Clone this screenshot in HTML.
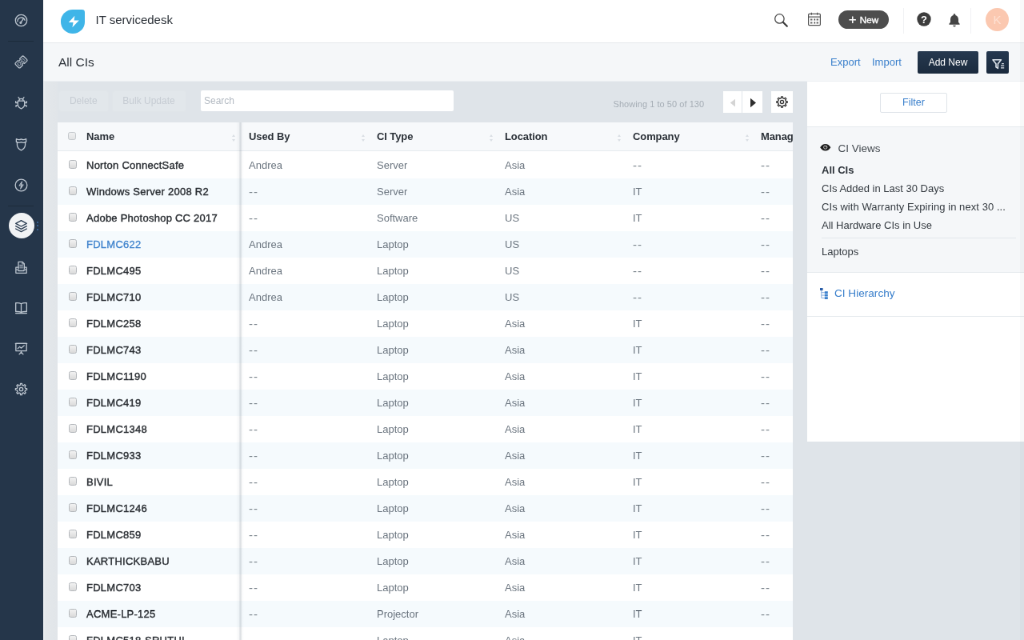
<!DOCTYPE html>
<html lang="en"><head><meta charset="utf-8"><title>IT servicedesk - All CIs</title>
<style>
*{box-sizing:border-box;margin:0;padding:0}
html,body{width:1024px;height:640px;overflow:hidden;background:#dfe4e9}
body{font-family:"Liberation Sans",sans-serif;color:#2b2f33}
#app{position:absolute;left:0;top:0;width:1280px;height:800px;transform:scale(.8);transform-origin:0 0;will-change:transform;font-size:14px;overflow:hidden;background:#dfe4e9}
#side{position:absolute;left:0;top:0;width:54px;height:800px;background:#25364a}
#side .sep{position:absolute;left:10px;width:32px;height:1px;background:#1c2a3a}
#side svg{position:absolute;left:16px;width:21px;height:21px;fill:none;stroke:#bcc5cf;stroke-width:1.5;stroke-linecap:round;stroke-linejoin:round;overflow:visible}
#side .act{position:absolute;left:10.8px;top:265.8px;width:32.5px;height:32.5px;border-radius:50%;background:#f1f3f5}
#side .dot{position:absolute;left:46px;width:2px;height:2px;border-radius:50%;background:#3a6ca8}
#hdr{position:absolute;left:54px;top:0;width:1226px;height:54px;background:#fff;border-bottom:1px solid #e6e9ec}
#hdr svg{position:absolute;overflow:visible}
#sub{position:absolute;left:54px;top:54px;width:1226px;height:48px;background:#f5f7f9;border-bottom:1px solid #eceff2}
#strip{position:absolute;left:54px;top:102px;width:18px;height:698px;background:linear-gradient(to right,#edf0f3 0,#e3e7ea 3px,#e1e5e9 100%)}
#rband{position:absolute;left:1274.5px;top:0;width:6px;height:800px;background:rgba(120,130,140,.05)}
#title{position:absolute;left:19px;top:15px;font-size:15.5px;color:#2b3138}
#logo{position:absolute;left:21.5px;top:12px;width:30.5px;height:29.5px;background:#3fb5e8;border-radius:50% 12% 50% 50%}
#brand{position:absolute;left:65.5px;top:15.5px;font-size:15px;color:#2b3138}
.vdiv{position:absolute;top:10px;width:1px;height:32px;background:#f0f1f3}
#newb{position:absolute;left:994px;top:13px;width:63px;height:23px;border-radius:12px;background:#4d4d4d;color:#fff;font-size:11.6px;line-height:24px;text-align:center;-webkit-text-stroke:.4px #fff;letter-spacing:.15px}
#newb span{font-size:17px;vertical-align:-.8px;margin-right:4px;-webkit-text-stroke:.2px #fff}
#avatar{position:absolute;left:1178px;top:10px;width:29px;height:29px;border-radius:50%;background:#fbc8b0;color:#fde0d2;font-size:15px;line-height:30px;text-align:center}
.lnk{position:absolute;top:16px;font-size:13px;color:#3b80cc}
#addnew{position:absolute;left:1093px;top:10px;width:76px;height:28px;border-radius:2px;background:linear-gradient(#26394f,#1b2b3e);color:#fff;font-size:12px;line-height:29px;text-align:center}
#fbtn{position:absolute;left:1179px;top:10px;width:28px;height:28px;border-radius:2px;background:linear-gradient(#25384f,#1a2a3d)}
.tb{position:absolute;top:113px;height:27px;border-radius:3px;background:#e2e7eb;color:#c6ccd3;font-size:12px;line-height:24px;text-align:center;border:1px solid #e0e5e9}
#search{position:absolute;left:251px;top:113px;width:316px;height:26px;background:#fff;border-radius:2px;color:#b3bac2;font-size:12px;line-height:26px;padding-left:4px}
#showing{position:absolute;left:766.5px;top:124px;font-size:11px;color:#a5adb5;letter-spacing:.05px}
.pg{position:absolute;top:114px;height:27px;background:#fff}
.pg svg{position:absolute;overflow:visible}
#tbl{position:absolute;left:72px;top:153px;width:919px;height:647px;background:#fff;overflow:hidden}
.th{position:absolute;top:0;height:36px;line-height:36px;letter-spacing:-.1px;font-weight:bold;font-size:13px;color:#2b3138;background:#f7f9fb;border-bottom:1px solid #e6eaee;white-space:nowrap;overflow:hidden}
.srt{position:absolute;top:14.5px;width:4px;height:10px;margin-left:2px}
.srt:before,.srt:after{content:"";position:absolute;left:0;border-left:2.2px solid transparent;border-right:2.2px solid transparent}
.srt:before{top:0;border-bottom:3.2px solid #d9dee3}
.srt:after{top:6px;border-top:3.2px solid #d9dee3}
.row{position:relative;height:33px;width:919px;background:#fff}
.row.alt{background:#f5fafd}
.row>div{position:absolute;top:0;height:33px;line-height:34px;white-space:nowrap;overflow:hidden}
.c0{left:0;width:228px}
.c{width:160px;padding-left:11px;color:#6c7680;font-size:13px}
.row .c:nth-child(2){left:228px}.row .c:nth-child(3){left:388px}.row .c:nth-child(4){left:548px}.row .c:nth-child(5){left:708px}.row .c:nth-child(6){left:868px}
.cb{position:absolute;left:13.5px;top:10.4px;width:10.5px;height:10.5px;border-radius:2.5px;border:1px solid #b3b7bb;background:linear-gradient(#f2f2f2,#dadada)}
.nm{position:absolute;left:36px;top:0;font-size:13px;color:#2a2e33;-webkit-text-stroke:.4px #2a2e33;letter-spacing:.25px}
.dd{letter-spacing:.9px;font-size:15px;color:#7d868e}
.hov .nm{color:#3f83cd;-webkit-text-stroke:.3px #3f83cd}
#shadow{position:absolute;left:223px;top:0;width:10px;height:647px;background:linear-gradient(to right,rgba(90,105,120,0),rgba(90,105,120,.05) 35%,rgba(90,105,120,.2) 50%,rgba(90,105,120,.2) 62%,rgba(90,105,120,.04) 75%,rgba(90,105,120,0))}
#rp{position:absolute;left:1009px;top:102px;width:271px;height:450px;background:#fff}
#rp .filter{position:absolute;left:91px;top:14px;width:84px;height:25px;border:1px solid #dfe4e9;border-radius:2px;color:#3b80cc;font-size:12.5px;line-height:22px;text-align:center}
#rp .views{position:absolute;left:0;top:56px;width:271px;height:183px;background:#f5f7f9;border-top:1px solid #e6eaee;border-bottom:1px solid #e6eaee}
#rp .v{position:absolute;left:18px;font-size:13px;color:#353b41;white-space:nowrap}
#rp .hr{position:absolute;left:18px;top:138px;width:243px;height:1px;background:#e3e7eb}
#rp .hier{position:absolute;left:34px;top:257px;font-size:13.6px;color:#3b80cc}
#rp svg{position:absolute;overflow:visible}
#rp .b2{position:absolute;left:0;top:293px;width:271px;height:1px;background:#e6eaee}
</style></head><body><div id="app">
<div id="side">
<div class="sep" style="top:51px"></div><div class="sep" style="top:257px"></div>
<div class="act"></div>
<div class="dot" style="top:277px"></div><div class="dot" style="top:281.300px"></div><div class="dot" style="top:285.600px"></div>
<svg viewBox="0 0 24 24" style="top:15.40px"><circle cx="12" cy="12" r="8.2"/><path d="M6.8 13.5a5.3 5.3 0 0 1 10.4-1.6"/><path d="M11.6 14.6L15.2 9.6"/><circle cx="11.3" cy="15.2" r="1.1"/></svg>
<svg viewBox="0 0 24 24" style="top:66.50px"><g transform="rotate(-45 12 12)"><path d="M5.400 7.200H10.200a1.800 1.800 0 0 0 3.600 0H18.600a1.600 1.600 0 0 1 1.600 1.600V15.200a1.600 1.600 0 0 1-1.600 1.600H13.800a1.800 1.800 0 0 0-3.600 0H5.400a1.600 1.600 0 0 1-1.600-1.600V8.800a1.600 1.600 0 0 1 1.600-1.600z"/><path d="M6.800 10h2.600c.4 1.200 1.400 2 2.600 2s2.200-.8 2.600-2h2.600v4h-2.600c-.4-1.200-1.400-2-2.600-2s-2.200.8-2.600 2H6.800z" stroke-width="1"/></g></svg>
<svg viewBox="0 0 24 24" style="top:118.40px"><path d="M7.2 9.2h9.6v5.2c0 3-2.2 5-4.8 6.2-2.600-1.2-4.800-3.200-4.800-6.200z"/><path d="M9 9.200a3 3 0 0 1 6 0"/><path d="M9.6 6.400L8 4M14.4 6.400L16 4M7.200 12H4.200v-2M16.800 12h3v-2M7.400 15.600H4.600v2M16.600 15.600h2.800v2"/></svg>
<svg viewBox="0 0 24 24" style="top:169.70px"><path d="M5 4.200c2.300 1.300 4.600 1.600 7 .200 2.400 1.400 4.700 1.100 7-.200v4.300c-2.300 1.200-4.600 1.500-7 .2-2.400 1.300-4.700 1-7-.2z"/><path d="M6.200 9.400v3.200c0 3.600 2.600 6.200 5.800 7.800 3.200-1.600 5.800-4.200 5.800-7.800V9.400"/></svg>
<svg viewBox="0 0 24 24" style="top:221.25px"><circle cx="12" cy="12" r="8.400"/><path d="M13.200 6.800L9.200 12.600h3l-1.200 4.600 4-5.800h-3z" stroke-width="1.2"/></svg>
<svg viewBox="0 0 24 24" style="top:271.60px"><g stroke="#2b3d52"><path d="M12 4.200L4.200 8.400 12 12.600l7.800-4.200z"/><path d="M4.200 12.200L12 16.400l7.800-4.200"/><path d="M4.200 16L12 20.200 19.800 16"/></g></svg>
<svg viewBox="0 0 24 24" style="top:323.85px"><path d="M8 13.400V3.800h5.600l2.800 2.800v6.800"/><path d="M13.400 4v2.800h2.800" stroke-width="1"/><path d="M10 8.400h4.200M10 10.400h4.200M10 12.400h4.200" stroke-width="1"/><path d="M8 11.600H4.400v8.200h15.200v-8.200H16.400M4.400 15h3.600v1.600h8V15h3.600"/></svg>
<svg viewBox="0 0 24 24" style="top:373.90px"><path d="M12 6.600c-2-1.300-4.800-1.500-7.800-1.200v12.200c3-.3 5.800-.1 7.800 1.200 2-1.300 4.800-1.500 7.800-1.200V5.400c-3-.3-5.800-.1-7.800 1.200zM12 6.600v12.200"/><path d="M4.200 20h15.600"/></svg>
<svg viewBox="0 0 24 24" style="top:425.00px"><rect x="4.400" y="5" width="15.200" height="10.600" rx=".6"/><path d="M7 12.400l2.800-2.800 2 2 4.400-3.600"/><path d="M12 15.600v2M9.200 20.400L12 17.400l2.800 3M3.800 5h16.400"/></svg>
<svg viewBox="0 0 24 24" style="top:475.60px"><path d="M17.97 10.75 L20.13 10.92 L20.13 13.08 L17.97 13.25 L17.10 15.34 L18.51 16.99 L16.99 18.51 L15.34 17.10 L13.25 17.97 L13.08 20.13 L10.92 20.13 L10.75 17.97 L8.66 17.10 L7.01 18.51 L5.49 16.99 L6.90 15.34 L6.03 13.25 L3.87 13.08 L3.87 10.92 L6.03 10.75 L6.90 8.66 L5.49 7.01 L7.01 5.49 L8.66 6.90 L10.75 6.03 L10.92 3.87 L13.08 3.87 L13.25 6.03 L15.34 6.90 L16.99 5.49 L18.51 7.01 L17.10 8.66Z"/><circle cx="12" cy="12" r="2.500"/></svg>
</div>
<div id="hdr"><div id="logo"><svg viewBox="0 0 31 30" style="left:0;top:0;width:31px;height:30px"><path d="M17.400 7.800L9.800 16h5.800l-1.200 6.200 8.400-8.600h-6.200z" fill="#fff"/></svg></div><div id="brand">IT servicedesk</div>
<svg viewBox="0 0 20 20" style="left:912.300px;top:15px;width:20px;height:20px" fill="none" stroke="#4a4a4a" stroke-width="1.300" stroke-linecap="round"><circle cx="8.400" cy="8.400" r="5.700"/><path d="M12.800 12.800L17.800 17.800" stroke-width="2.200" stroke="#3a3a3a"/></svg>
<svg viewBox="0 0 20 20" style="left:953.500px;top:14.300px;width:20px;height:20px" fill="none" stroke="#555" stroke-width="1.200"><rect x="2.600" y="3.400" width="14.800" height="14.200" rx="1"/><path d="M2.600 7.200h14.800M6.400 1.800v3M13.600 1.800v3"/><path d="M5 9.600h2.400v2H5zM8.800 9.600h2.400v2H8.800zM12.600 9.600h2.400v2h-2.400zM5 13.400h2.400v2H5zM8.800 13.400h2.400v2H8.800zM12.600 13.400h2.400v2h-2.400z" fill="#666" stroke="none"/></svg>
<svg viewBox="0 0 20 20" style="left:1091px;top:14px;width:20px;height:20px"><circle cx="10" cy="10" r="8.700" fill="#3d3d3d"/><text x="10" y="14.600" text-anchor="middle" font-family="Liberation Sans, sans-serif" font-weight="bold" font-size="13" fill="#fff">?</text></svg>
<svg viewBox="0 0 20 20" style="left:1129.300px;top:15.200px;width:20px;height:20px" fill="#454545"><path d="M10 2.200c-.8 0-1.300.5-1.300 1.200v.5C6.300 4.600 5 6.800 5 9.200v3.600L3.400 14.800v1h13.200v-1L15 12.800V9.200c0-2.400-1.300-4.600-3.700-5.300v-.5c0-.7-.5-1.200-1.300-1.200z"/><path d="M8.200 16.800a1.800 1.800 0 0 0 3.600 0z"/></svg>
<div id="newb"><span>+</span>New</div>
<div class="vdiv" style="left:1075px"></div><div class="vdiv" style="left:1159px"></div>
<div id="avatar">K</div>
</div>
<div id="sub"><div id="title">All CIs</div>
<div class="lnk" style="left:984px">Export</div><div class="lnk" style="left:1036px">Import</div>
<div id="addnew">Add New</div><div id="fbtn"><svg viewBox="0 0 28 28" style="position:absolute;left:0;top:0;width:28px;height:28px" fill="none" stroke="#dfe5eb" stroke-width="1.300" stroke-linejoin="round" stroke-linecap="butt"><path d="M8 10.800h10.400l-4 5v5.600l-2.400-1.600v-4z" stroke-width="1.600"/><path d="M19.200 15.600h2.600M18 18.200h4.200M18 20.800h4.200" stroke-width="1.200"/></svg></div>
</div>
<div id="strip"></div>
<div class="tb" style="left:72.5px;width:63.5px">Delete</div>
<div class="tb" style="left:139.5px;width:93px">Bulk Update</div>
<div id="search">Search</div>
<div id="showing">Showing 1 to 50 of 130</div>
<div class="pg" style="left:904px;width:23px"><svg viewBox="0 0 23 27" style="left:0;top:0;width:23px;height:27px"><path d="M15 9.800v9.600l-6.200-4.800z" fill="#d4d4d4"/></svg></div><div class="pg" style="left:927.500px;width:25px"><svg viewBox="0 0 25 27" style="left:0;top:0;width:25px;height:27px"><path d="M10 8.800v11.400l7-5.700z" fill="#2e2e2e"/></svg></div><div class="pg" style="left:963.500px;width:27px"><svg viewBox="0 0 24 24" style="left:4px;top:3.500px;width:19px;height:19px" fill="none" stroke="#333" stroke-width="1.700" stroke-linejoin="round"><path d="M18.07 10.73 L20.33 10.89 L20.33 13.11 L18.07 13.27 L17.19 15.39 L18.67 17.11 L17.11 18.67 L15.39 17.19 L13.27 18.07 L13.11 20.33 L10.89 20.33 L10.73 18.07 L8.61 17.19 L6.89 18.67 L5.33 17.11 L6.81 15.39 L5.93 13.27 L3.67 13.11 L3.67 10.89 L5.93 10.73 L6.81 8.61 L5.33 6.89 L6.89 5.33 L8.61 6.81 L10.73 5.93 L10.89 3.67 L13.11 3.67 L13.27 5.93 L15.39 6.81 L17.11 5.33 L18.67 6.89 L17.19 8.61Z"/><circle cx="12" cy="12" r="2.600"/></svg></div>
<div id="tbl">
<div class="th" style="left:0;width:228px;padding-left:36px"><span class="cb" style="top:12px;left:12.800px;width:10px;height:10px;border-color:#c4c8cc;background:linear-gradient(#f0f1f2,#e2e3e4)"></span>Name<i class="srt" style="left:216px"></i></div>
<div class="th" style="left:228px;width:160px;padding-left:11px">Used By<i class="srt" style="left:150px"></i></div>
<div class="th" style="left:388px;width:160px;padding-left:11px">CI Type<i class="srt" style="left:150px"></i></div>
<div class="th" style="left:548px;width:160px;padding-left:11px">Location<i class="srt" style="left:150px"></i></div>
<div class="th" style="left:708px;width:160px;padding-left:11px">Company<i class="srt" style="left:150px"></i></div>
<div class="th" style="left:868px;width:60px;padding-left:11px">Managed By</div>
<div style="height:37px"></div>
<div class="row"><div class="c0"><span class="cb"></span><span class="nm">Norton ConnectSafe</span></div><div class="c">Andrea</div><div class="c">Server</div><div class="c">Asia</div><div class="c"><span class="dd">--</span></div><div class="c last"><span class="dd">--</span></div></div>
<div class="row alt"><div class="c0"><span class="cb"></span><span class="nm">Windows Server 2008 R2</span></div><div class="c"><span class="dd">--</span></div><div class="c">Server</div><div class="c">Asia</div><div class="c">IT</div><div class="c last"><span class="dd">--</span></div></div>
<div class="row"><div class="c0"><span class="cb"></span><span class="nm">Adobe Photoshop CC 2017</span></div><div class="c"><span class="dd">--</span></div><div class="c">Software</div><div class="c">US</div><div class="c">IT</div><div class="c last"><span class="dd">--</span></div></div>
<div class="row alt hov"><div class="c0"><span class="cb"></span><span class="nm">FDLMC622</span></div><div class="c">Andrea</div><div class="c">Laptop</div><div class="c">US</div><div class="c"><span class="dd">--</span></div><div class="c last"><span class="dd">--</span></div></div>
<div class="row"><div class="c0"><span class="cb"></span><span class="nm">FDLMC495</span></div><div class="c">Andrea</div><div class="c">Laptop</div><div class="c">US</div><div class="c"><span class="dd">--</span></div><div class="c last"><span class="dd">--</span></div></div>
<div class="row alt"><div class="c0"><span class="cb"></span><span class="nm">FDLMC710</span></div><div class="c">Andrea</div><div class="c">Laptop</div><div class="c">US</div><div class="c"><span class="dd">--</span></div><div class="c last"><span class="dd">--</span></div></div>
<div class="row"><div class="c0"><span class="cb"></span><span class="nm">FDLMC258</span></div><div class="c"><span class="dd">--</span></div><div class="c">Laptop</div><div class="c">Asia</div><div class="c">IT</div><div class="c last"><span class="dd">--</span></div></div>
<div class="row alt"><div class="c0"><span class="cb"></span><span class="nm">FDLMC743</span></div><div class="c"><span class="dd">--</span></div><div class="c">Laptop</div><div class="c">Asia</div><div class="c">IT</div><div class="c last"><span class="dd">--</span></div></div>
<div class="row"><div class="c0"><span class="cb"></span><span class="nm">FDLMC1190</span></div><div class="c"><span class="dd">--</span></div><div class="c">Laptop</div><div class="c">Asia</div><div class="c">IT</div><div class="c last"><span class="dd">--</span></div></div>
<div class="row alt"><div class="c0"><span class="cb"></span><span class="nm">FDLMC419</span></div><div class="c"><span class="dd">--</span></div><div class="c">Laptop</div><div class="c">Asia</div><div class="c">IT</div><div class="c last"><span class="dd">--</span></div></div>
<div class="row"><div class="c0"><span class="cb"></span><span class="nm">FDLMC1348</span></div><div class="c"><span class="dd">--</span></div><div class="c">Laptop</div><div class="c">Asia</div><div class="c">IT</div><div class="c last"><span class="dd">--</span></div></div>
<div class="row alt"><div class="c0"><span class="cb"></span><span class="nm">FDLMC933</span></div><div class="c"><span class="dd">--</span></div><div class="c">Laptop</div><div class="c">Asia</div><div class="c">IT</div><div class="c last"><span class="dd">--</span></div></div>
<div class="row"><div class="c0"><span class="cb"></span><span class="nm">BIVIL</span></div><div class="c"><span class="dd">--</span></div><div class="c">Laptop</div><div class="c">Asia</div><div class="c">IT</div><div class="c last"><span class="dd">--</span></div></div>
<div class="row alt"><div class="c0"><span class="cb"></span><span class="nm">FDLMC1246</span></div><div class="c"><span class="dd">--</span></div><div class="c">Laptop</div><div class="c">Asia</div><div class="c">IT</div><div class="c last"><span class="dd">--</span></div></div>
<div class="row"><div class="c0"><span class="cb"></span><span class="nm">FDLMC859</span></div><div class="c"><span class="dd">--</span></div><div class="c">Laptop</div><div class="c">Asia</div><div class="c">IT</div><div class="c last"><span class="dd">--</span></div></div>
<div class="row alt"><div class="c0"><span class="cb"></span><span class="nm">KARTHICKBABU</span></div><div class="c"><span class="dd">--</span></div><div class="c">Laptop</div><div class="c">Asia</div><div class="c">IT</div><div class="c last"><span class="dd">--</span></div></div>
<div class="row"><div class="c0"><span class="cb"></span><span class="nm">FDLMC703</span></div><div class="c"><span class="dd">--</span></div><div class="c">Laptop</div><div class="c">Asia</div><div class="c">IT</div><div class="c last"><span class="dd">--</span></div></div>
<div class="row alt"><div class="c0"><span class="cb"></span><span class="nm">ACME-LP-125</span></div><div class="c"><span class="dd">--</span></div><div class="c">Projector</div><div class="c">Asia</div><div class="c">IT</div><div class="c last"><span class="dd">--</span></div></div>
<div class="row"><div class="c0"><span class="cb"></span><span class="nm">FDLMC518-SRUTHI</span></div><div class="c"><span class="dd">--</span></div><div class="c">Laptop</div><div class="c">Asia</div><div class="c">IT</div><div class="c last"><span class="dd">--</span></div></div>
<div id="shadow"></div>
</div>
<div id="rp">
<div class="filter">Filter</div>
<div class="views">
<svg viewBox="0 0 14 9" style="left:15.500px;top:20.500px;width:13.500px;height:8.500px"><path d="M0 4.500C1.800 1.600 4.200 0 7 0s5.200 1.600 7 4.500C12.200 7.400 9.800 9 7 9S1.800 7.400 0 4.500z" fill="#1c1c1c"/><circle cx="7" cy="4.300" r="2.300" fill="none" stroke="#d9d9d9" stroke-width=".9"/><circle cx="7.600" cy="3.800" r=".7" fill="#bbb"/></svg><div class="v" style="left:38.500px;top:19px;font-size:13.500px;color:#444a50">CI Views</div>
<div class="v" style="top:46px;font-weight:bold;color:#2b3138">All CIs</div>
<div class="v" style="top:69px">CIs Added in Last 30 Days</div>
<div class="v" style="top:92px;letter-spacing:.07px">CIs with Warranty Expiring in next 30 ...</div>
<div class="v" style="top:115px">All Hardware CIs in Use</div>
<div class="hr"></div>
<div class="v" style="top:148px">Laptops</div>
</div>
<svg viewBox="0 0 10 14" style="left:15.500px;top:257.500px;width:10px;height:14px"><rect x="0" y="0" width="3.600" height="3" fill="#2a5ea8"/><path d="M1.800 3v9.500h4M1.800 5.700h4M1.800 9.100h4" fill="none" stroke="#7aa5da" stroke-width=".9"/><rect x="5.800" y="4.200" width="4" height="2.800" fill="#3b80cc"/><rect x="5.800" y="7.700" width="4" height="2.800" fill="#3b80cc"/><rect x="5.800" y="11.200" width="4" height="2.800" fill="#3b80cc"/></svg><div class="hier">CI Hierarchy</div>
<div class="b2"></div>
</div>
<div id="rband"></div>
</div></body></html>
